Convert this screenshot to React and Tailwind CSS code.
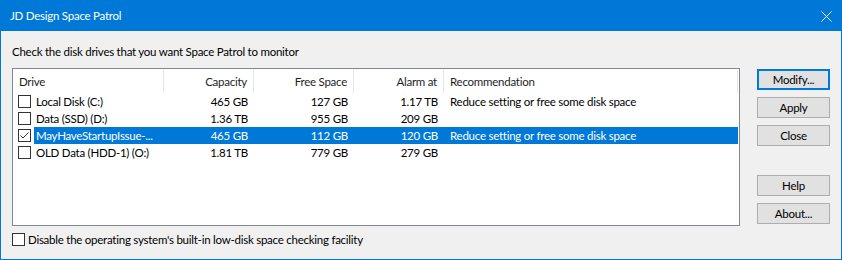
import React from 'react';

const drives = [
  { name: 'Local Disk (C:)', capacity: '465 GB', free: '127 GB', alarm: '1.17 TB', rec: 'Reduce setting or free some disk space', checked: false, selected: false },
  { name: 'Data (SSD) (D:)', capacity: '1.36 TB', free: '955 GB', alarm: '209 GB', rec: '', checked: false, selected: false },
  { name: 'MayHaveStartupIssue-...', capacity: '465 GB', free: '112 GB', alarm: '120 GB', rec: 'Reduce setting or free some disk space', checked: true, selected: true },
  { name: 'OLD Data (HDD-1) (O:)', capacity: '1.81 TB', free: '779 GB', alarm: '279 GB', rec: '', checked: false, selected: false },
];

const CheckBox = ({ checked }) => (
  <span className="w-[13px] h-[13px] border border-[#333333] bg-white flex items-center justify-center shrink-0">
    {checked && (
      <svg width="11" height="11" viewBox="0 0 11 11">
        <polyline points="1.5,5.5 4,8 9.5,2.5" fill="none" stroke="#333333" strokeWidth="1" />
      </svg>
    )}
  </span>
);

const Button = ({ label, primary, className = '' }) => (
  <div
    className={`h-[21px] flex items-center justify-center bg-[#e1e1e1] ${
      primary ? 'border-2 border-[#0078d7]' : 'border border-[#adadad]'
    } ${className}`}
  >
    {label}
  </div>
);

const App = () => {
  return (
    <div className="w-[842px] h-[260px] border border-[#0078d7] bg-[#f0f0f0] flex flex-col font-['Lato',sans-serif] text-[11.5px] tracking-[-0.25px] text-black">
      <div className="h-[30px] shrink-0 bg-[#0078d7] flex items-center pl-[9px] pr-[9px] text-white">
        <span>JD Design Space Patrol</span>
        <svg className="ml-auto" width="11" height="11" viewBox="0 0 11 11">
          <path d="M0.5 0.5 L10.5 10.5 M10.5 0.5 L0.5 10.5" stroke="white" strokeWidth="1" />
        </svg>
      </div>

      <div className="flex-1 pl-[11px] pt-[13px]">
        <div className="leading-[16px]">Check the disk drives that you want Space Patrol to monitor</div>

        <div className="mt-[8px] flex">
          <div className="w-[728px] h-[158px] border border-[#828790] bg-white">
            <div className="h-[24px] flex text-[#1e1e1e]">
              <div className="w-[151px] pl-[6px] flex items-center border-r border-[#e5e5e5] mt-[1px]">Drive</div>
              <div className="w-[90px] pr-[6px] flex items-center justify-end border-r border-[#e5e5e5] mt-[1px]">Capacity</div>
              <div className="w-[100px] pr-[6px] flex items-center justify-end border-r border-[#e5e5e5] mt-[1px]">Free Space</div>
              <div className="w-[90px] pr-[6px] flex items-center justify-end border-r border-[#e5e5e5] mt-[1px]">Alarm at</div>
              <div className="w-[294px] pl-[6px] flex items-center border-r border-[#e5e5e5] mt-[1px]">Recommendation</div>
            </div>

            {drives.map((d) => (
              <div key={d.name} className="h-[17px] flex items-center">
                <div className="w-[21px] pl-[5px] flex items-center">
                  <CheckBox checked={d.checked} />
                </div>
                <div
                  className={`flex-1 h-[17px] flex items-center leading-[17px] mr-[1px] ${
                    d.selected ? 'bg-[#0078d7] text-white' : ''
                  }`}
                >
                  <div className="w-[130px] pl-[2px] whitespace-nowrap">{d.name}</div>
                  <div className="w-[90px] pr-[6px] text-right">{d.capacity}</div>
                  <div className="w-[100px] pr-[6px] text-right">{d.free}</div>
                  <div className="w-[90px] pr-[6px] text-right">{d.alarm}</div>
                  <div className="flex-1 pl-[6px] whitespace-nowrap">{d.rec}</div>
                </div>
              </div>
            ))}
          </div>

          <div className="ml-[17px] mt-[1px] w-[73px] flex flex-col">
            <Button label="Modify..." primary />
            <Button label="Apply" className="mt-[7px]" />
            <Button label="Close" className="mt-[7px]" />
            <Button label="Help" className="mt-[29px]" />
            <Button label="About..." className="mt-[7px]" />
          </div>
        </div>

        <div className="mt-[7px] flex items-center gap-[3px]">
          <CheckBox checked={false} />
          <span className="leading-[13px]">Disable the operating system's built-in low-disk space checking facility</span>
        </div>
      </div>
    </div>
  );
};

export default App;
